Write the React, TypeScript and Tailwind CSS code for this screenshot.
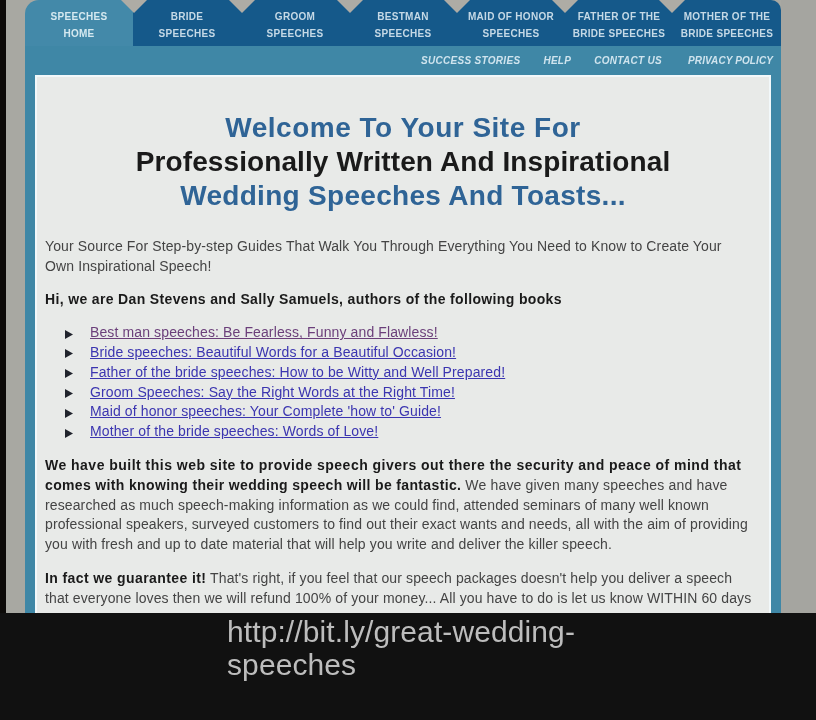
import React from "react";

const tabs = [
  ["SPEECHES", "HOME"],
  ["BRIDE", "SPEECHES"],
  ["GROOM", "SPEECHES"],
  ["BESTMAN", "SPEECHES"],
  ["MAID OF HONOR", "SPEECHES"],
  ["FATHER OF THE", "BRIDE SPEECHES"],
  ["MOTHER OF THE", "BRIDE SPEECHES"],
];

const links = [
  "Best man speeches: Be Fearless, Funny and Flawless!",
  "Bride speeches: Beautiful Words for a Beautiful Occasion!",
  "Father of the bride speeches: How to be Witty and Well Prepared!",
  "Groom Speeches: Say the Right Words at the Right Time!",
  "Maid of honor speeches: Your Complete 'how to' Guide!",
  "Mother of the bride speeches: Words of Love!",
];

export default function App() {
  return (
    <div className="w-[816px] h-[720px] overflow-hidden bg-[#111111] flex flex-col font-['Liberation_Sans',Arial,sans-serif]">
      <div className="h-[613px] shrink-0 flex overflow-hidden bg-[#a5a5a0]">
        <div className="w-[6px] bg-[#0c0a08] shrink-0" />
        <div className="w-[19px] bg-[#a8a8a2] shrink-0" />
        <div className="w-[756px] shrink-0 relative flex flex-col bg-[#3f87a6] blur-[0.6px]">
          <div className="flex h-[46px] shrink-0 bg-[#a8a8a2]">
            {tabs.map((t, i) => (
              <div
                key={i}
                className={
                  i === 0
                    ? "w-[108px] rounded-tl-[14px] bg-[#4389a9] text-[#d5e9f0] flex flex-col items-center pt-[8px] text-[10px] leading-[17px] font-bold tracking-[0.3px]"
                    : i === 6
                      ? "flex-1 rounded-tr-[10px] bg-[#15598a] text-[#c5d9e6] flex flex-col items-center pt-[8px] text-[10px] leading-[17px] font-bold tracking-[0.3px]"
                      : "flex-1 bg-[#15598a] text-[#c5d9e6] flex flex-col items-center pt-[8px] text-[10px] leading-[17px] font-bold tracking-[0.3px]"
                }
              >
                <span className="whitespace-nowrap">{t[0]}</span>
                <span className="whitespace-nowrap">{t[1]}</span>
              </div>
            ))}
          </div>
          {[109, 217, 325, 432, 540, 647].map((x) => (
            <svg key={x} width="26" height="14" viewBox="0 0 26 14" className="absolute top-0" style={{ left: x - 13 }}>
              <polygon points="0,0 26,0 13,13" fill="#aeaca5" />
            </svg>
          ))}
          <div className="h-[29px] shrink-0 flex justify-end items-center pr-[8px] text-[10px] font-bold italic tracking-[0.3px] text-[#cfe4ee] whitespace-nowrap">
            <span>SUCCESS STORIES</span>
            <span className="ml-[23px]">HELP</span>
            <span className="ml-[23px]">CONTACT US</span>
            <span className="ml-[26px] tracking-[0.1px]">PRIVACY POLICY</span>
          </div>
          <div className="ml-[10px] mr-[10px] flex-1 bg-[#e8eae8] border-t-2 border-l-2 border-r-2 border-[#f2f8fa] px-[8px] pt-[34px] text-[14px] tracking-[0.12px] leading-[19.8px] text-[#444444]">
            <h1 className="text-center font-bold text-[28px] tracking-normal leading-[34px] text-[#2f6496]">
              <div className="tracking-[0.5px]">Welcome To Your Site For</div>
              <div className="text-[#1a1a1a] tracking-[0.1px]">Professionally Written And Inspirational</div>
              <div className="tracking-[0.3px]">Wedding Speeches And Toasts...</div>
            </h1>
            <p className="mt-[22.5px] w-[700px] leading-[20px]">
              Your Source For Step-by-step Guides That Walk You Through Everything You Need to Know to Create Your Own Inspirational Speech!
            </p>
            <p className="mt-[14px] font-bold tracking-[0.35px] text-[#1a1a1a]">Hi, we are Dan Stevens and Sally Samuels, authors of the following books</p>
            <ul className="mt-[14px] flex flex-col">
              {links.map((l, i) => (
                <li key={l} className="flex items-center h-[19.8px]">
                  <svg width="9" height="9" viewBox="0 0 9 9" className="ml-[19px] mr-[17px] shrink-0 mt-[2px]">
                    <polygon points="1,0 9,4.5 1,9" fill="#20232c" />
                  </svg>
                  <a className={i === 0 ? "underline text-[#6b3f7a] whitespace-nowrap" : "underline text-[#3b35b0] whitespace-nowrap"}>{l}</a>
                </li>
              ))}
            </ul>
            <p className="mt-[14px] w-[712px]">
              <b className="text-[#1a1a1a] tracking-[0.48px]">
                We have built this web site to provide speech givers out there the security and peace of mind that{" "}
              </b>
              <b className="text-[#1a1a1a] tracking-[0.35px]">comes with knowing their wedding speech will be fantastic.</b>{" "}
              <span className="tracking-[0.18px]">We have given many speeches and have</span> researched as much speech-making information as we could find, attended seminars of many well known professional speakers, surveyed customers to find out their exact wants and needs, all with the aim of providing you with fresh and up to date material that will help you write and deliver the killer speech.
            </p>
            <p className="mt-[14px] w-[712px]">
              <b className="text-[#1a1a1a] tracking-[0.4px]">In fact we guarantee it!</b> That's right, if you feel that our speech packages doesn't help you deliver a speech that everyone loves then we will refund 100% of your money... All you have to do is let us know WITHIN 60 days
            </p>
          </div>
        </div>
        <div className="flex-1 bg-[#a5a5a0]" />
      </div>
      <div className="flex-1 pl-[227px] pt-[2px] text-[30px] tracking-[0.1px] leading-[33px] text-[#bdbdbd] blur-[0.5px]">
        <div>http://bit.ly/great-wedding-</div>
        <div>speeches</div>
      </div>
    </div>
  );
}
